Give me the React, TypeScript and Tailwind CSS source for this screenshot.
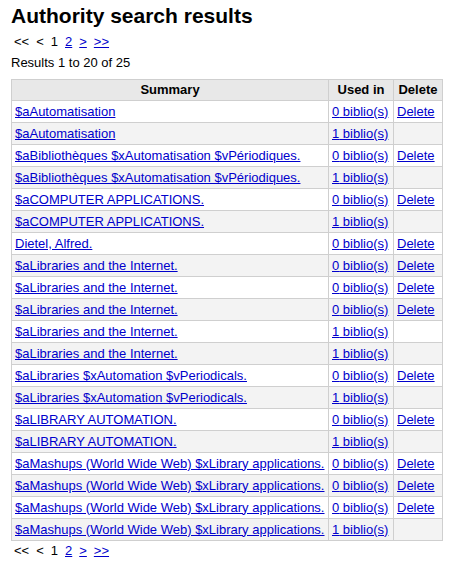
import React from "react";

const rows: [string, number, boolean][] = [
  ["$aAutomatisation", 0, true],
  ["$aAutomatisation", 1, false],
  ["$aBibliothèques $xAutomatisation $vPériodiques.", 0, true],
  ["$aBibliothèques $xAutomatisation $vPériodiques.", 1, false],
  ["$aCOMPUTER APPLICATIONS.", 0, true],
  ["$aCOMPUTER APPLICATIONS.", 1, false],
  ["Dietel, Alfred.", 0, true],
  ["$aLibraries and the Internet.", 0, true],
  ["$aLibraries and the Internet.", 0, true],
  ["$aLibraries and the Internet.", 0, true],
  ["$aLibraries and the Internet.", 1, false],
  ["$aLibraries and the Internet.", 1, false],
  ["$aLibraries $xAutomation $vPeriodicals.", 0, true],
  ["$aLibraries $xAutomation $vPeriodicals.", 1, false],
  ["$aLIBRARY AUTOMATION.", 0, true],
  ["$aLIBRARY AUTOMATION.", 1, false],
  ["$aMashups (World Wide Web) $xLibrary applications.", 0, true],
  ["$aMashups (World Wide Web) $xLibrary applications.", 0, true],
  ["$aMashups (World Wide Web) $xLibrary applications.", 0, true],
  ["$aMashups (World Wide Web) $xLibrary applications.", 1, false],
];

function Pager() {
  return (
    <div className="flex gap-[7px] pl-[3px] text-[13px] leading-[16px] text-black">
      <span>&lt;&lt;</span>
      <span>&lt;</span>
      <span>1</span>
      <a className="text-[#0000cc] underline">2</a>
      <a className="text-[#0000cc] underline">&gt;</a>
      <a className="text-[#0000cc] underline">&gt;&gt;</a>
    </div>
  );
}

export default function App() {
  return (
    <div className="w-[451px] h-[564px] bg-white px-[11px] pt-[4px] text-black" style={{ fontFamily: '"Liberation Sans", Arial, sans-serif' }}>
      <h1 className="text-[21px] font-bold leading-[24px] mb-[6px]">Authority search results</h1>
      <Pager />
      <div className="text-[13px] leading-[16px] mt-[5px] mb-[8px]">Results 1 to 20 of 25</div>
      <table className="table-fixed border-collapse border border-[#bcbcbc] w-[431px] text-[13px]">
        <colgroup>
          <col className="w-[317px]" />
          <col className="w-[65px]" />
          <col className="w-[49px]" />
        </colgroup>
        <thead>
          <tr className="bg-[#e8e8e8] h-[21px]">
            <th className="border border-[#cfcfcf] font-bold text-center px-[4px] leading-[16px]">Summary</th>
            <th className="border border-[#cfcfcf] font-bold text-center px-[4px] leading-[16px] whitespace-nowrap">Used in</th>
            <th className="border border-[#cfcfcf] font-bold text-center px-[4px] leading-[16px]">Delete</th>
          </tr>
        </thead>
        <tbody>
          {rows.map(([s, n, d], i) => (
            <tr key={i} className={i % 2 === 0 ? "bg-white h-[22px]" : "bg-[#f3f3f3] h-[22px]"}>
              <td className="border border-[#cfcfcf] px-[3px] leading-[16px] whitespace-nowrap overflow-hidden">
                <a className="text-[#0000cc] underline">{s}</a>
              </td>
              <td className="border border-[#cfcfcf] px-[3px] leading-[16px] whitespace-nowrap">
                <a className="text-[#0000cc] underline">{n} biblio(s)</a>
              </td>
              <td className="border border-[#cfcfcf] px-[3px] leading-[16px] whitespace-nowrap">
                {d ? <a className="text-[#0000cc] underline">Delete</a> : null}
              </td>
            </tr>
          ))}
        </tbody>
      </table>
      <div className="mt-[2px]">
        <Pager />
      </div>
    </div>
  );
}
